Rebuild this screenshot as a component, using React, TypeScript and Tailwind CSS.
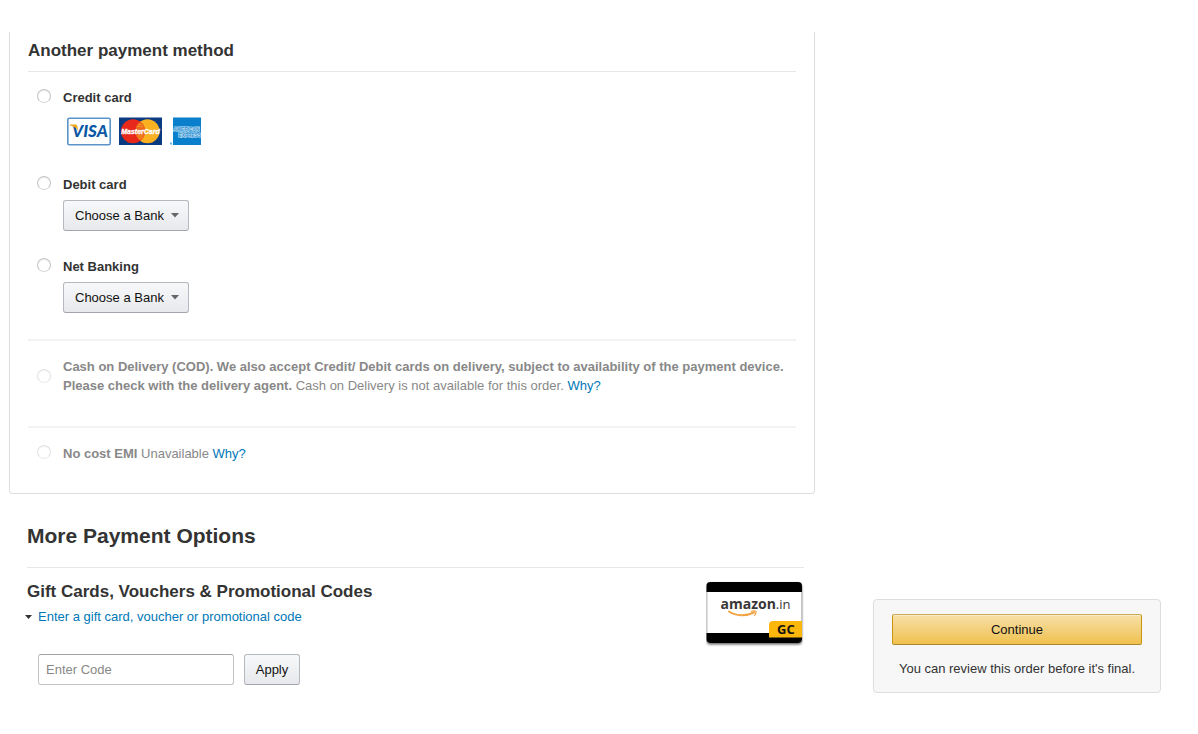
import type { ReactNode } from 'react';

const BANKS = ['Axis Bank', 'HDFC Bank', 'ICICI Bank', 'State Bank of India'];

const VisaLogo = () => (
  <svg viewBox="0 0 44 29" className="w-11 h-[29px]" role="img" aria-label="Visa">
    <rect x="0.800" y="1.200" width="42.400" height="26.600" rx="1.500" fill="#fff" stroke="#5a93c8" strokeWidth="1.600" />
    <text
      x="5"
      y="20"
      fontFamily="Lato, sans-serif"
      fontSize="17"
      fontWeight="900"
      fontStyle="italic"
      fill="#0b58a4"
    >
      VISA
    </text>
    <path d="M3 7.500h5.500c1 0 1.600.6 1.800 1.500l1 5C9.800 11.200 7.200 9 3 8.500z" fill="#f2a91d" />
  </svg>
);

const MasterCardLogo = () => (
  <svg viewBox="0 0 43 29" className="w-[43px] h-[29px]" role="img" aria-label="MasterCard">
    <rect y="0.500" width="43" height="27.500" fill="#0a3a80" />
    <circle cx="28.500" cy="14.200" r="12" fill="#f9b021" />
    <circle cx="14" cy="14.200" r="12" fill="#e8281b" />
    <path d="M21.200 4.600a12 12 0 0 1 0 19.200 12 12 0 0 1 0-19.200z" fill="#ee6a1f" />
    <path d="M19 7.500h4M17.800 9.500h6.400M17.800 19h6.400M19 21h4" stroke="#f39a20" strokeWidth="0.800" />
    <text
      x="21.500"
      y="17"
      textAnchor="middle"
      fontFamily="Liberation Sans, sans-serif"
      fontSize="7"
      fontWeight="700"
      fontStyle="italic"
      fill="#fff"
      stroke="#fff"
      strokeWidth="0.300"
    >
      MasterCard
    </text>
  </svg>
);

const AmexLogo = () => (
  <svg viewBox="0 0 31 29" className="w-[31px] h-[29px]" role="img" aria-label="American Express">
    <rect x="3" y="0.500" width="28" height="27.500" fill="#0a7fcb" />
    <rect y="25.500" width="2" height="2" fill="#6db6e2" />
    <g
      fontFamily="Liberation Sans, sans-serif"
      fontSize="4.800"
      fontWeight="700"
      fill="#2b8fd2"
      stroke="#c5e2f4"
      strokeWidth="1.200"
      paintOrder="stroke"
    >
      <text x="3.500" y="14">AMERICAN</text>
      <text x="8.500" y="19.500">EXPRESS</text>
    </g>
  </svg>
);

const GiftCardArt = () => (
  <svg viewBox="0 0 98 68" className="w-[98px] h-[68px]" role="img" aria-label="amazon.in gift card">
    <defs>
      <clipPath id="card">
        <rect x="0.500" y="2" width="95.500" height="61" rx="4" />
      </clipPath>
      <filter id="shadow" x="-10%" y="-10%" width="120%" height="130%">
        <feDropShadow dx="0" dy="1.500" stdDeviation="1.200" floodOpacity="0.600" />
      </filter>
    </defs>
    <rect x="0.500" y="2" width="95.500" height="61" rx="4" fill="#777" filter="url(#shadow)" />
    <g clipPath="url(#card)">
      <rect width="97" height="64" fill="#fff" />
      <rect width="97" height="12" fill="#000" />
      <rect y="53" width="97" height="11" fill="#000" />
      <path d="M63 57.500V45a4 4 0 0 1 4-4h30v16.500z" fill="#fbb70b" />
      <path d="M1 12v41M95.500 12v29" stroke="#c4c4c4" />
    </g>
    <text x="14.500" y="29" fontFamily="Open Sans, sans-serif" fontSize="14" fontWeight="700" fill="#3a3637">
      amazon
      <tspan fontSize="13" fontWeight="400">
        .in
      </tspan>
    </text>
    <path d="M23 31.500c7 4.800 17 4.800 25 1" fill="none" stroke="#f3a545" strokeWidth="2" strokeLinecap="round" />
    <path d="M45 31.500c2-.8 4-.8 5 0 .2 1.400-.5 3-1.700 4.300" fill="none" stroke="#f3a545" strokeWidth="1.200" />
    <text x="71" y="54" fontFamily="Open Sans, sans-serif" fontSize="13" fontWeight="700" fill="#111">
      GC
    </text>
  </svg>
);

const Radio = ({ id, disabled }: { id: string; disabled?: boolean }) => (
  <input
    type="radio"
    id={id}
    name="payment"
    disabled={disabled}
    className="appearance-none shrink-0 w-[14px] h-[14px] rounded-full bg-white border border-[#c4c4c4] border-b-[#d8d8d8] shadow-[inset_0_1px_1px_rgba(0,0,0,0.08)] checked:border-4 checked:border-[#e77600] disabled:opacity-50"
  />
);

const BankSelect = ({ label }: { label: string }) => (
  <div className="relative w-[126px] mt-[6px]">
    <select
      aria-label={label}
      className="appearance-none block w-full h-[31px] pl-[11px] pr-6 rounded-[3px] border border-[#b4b8bf] border-b-[#a2a6ac] bg-linear-to-b from-[#f7f8fa] to-[#e7e9ec] text-[#111]"
    >
      <option>Choose a Bank</option>
      {BANKS.map((bank) => (
        <option key={bank}>{bank}</option>
      ))}
    </select>
    <svg
      viewBox="0 0 8 5"
      className="absolute right-[10px] top-[13px] w-2 h-[5px] fill-[#666] pointer-events-none"
    >
      <path d="M0 0h8L4 4.500z" />
    </svg>
  </div>
);

const Option = ({ id, label, children }: { id: string; label: string; children: ReactNode }) => (
  <div className="flex gap-3 items-start">
    <div className="pt-px flex">
      <Radio id={id} />
    </div>
    <div>
      <label htmlFor={id} className="block font-bold">
        {label}
      </label>
      {children}
    </div>
  </div>
);

const App = () => {
  return (
    <div className="flex items-end gap-[58px] pt-8 pl-[9px] pr-[37px] pb-10 font-['Liberation_Sans',Arial,sans-serif] text-[13px] leading-[19px] text-[#333] bg-white">
      <main className="flex-1 pb-2">
        {/* Payment methods */}
        <section className="border border-t-0 border-[#ddd] rounded-b-[4px] pt-[7px] px-[18px] pb-[30px]">
          <h2 className="text-[17px] leading-6 font-bold pb-2 border-b border-[#e7e7e7]">
            Another payment method
          </h2>

          <div className="pt-4 pl-[9px] pb-[26px]">
            <Option id="credit" label="Credit card">
              <div className="flex gap-2 mt-[10px] pl-1">
                <VisaLogo />
                <MasterCardLogo />
                <AmexLogo />
              </div>
            </Option>
            <div className="mt-[29px]">
              <Option id="debit" label="Debit card">
                <BankSelect label="Debit card bank" />
              </Option>
            </div>
            <div className="mt-[26px]">
              <Option id="net" label="Net Banking">
                <BankSelect label="Net banking bank" />
              </Option>
            </div>
          </div>

          <div className="flex gap-3 items-center border-t-2 border-[#f3f3f3] pt-4 pl-[9px] pb-[31px] text-[#888]">
            <Radio id="cod" disabled />
            <p>
              <label htmlFor="cod" className="font-bold">
                Cash on Delivery (COD). We also accept Credit/ Debit cards on delivery, subject to
                availability of the payment device. Please check with the delivery agent.
              </label>{' '}
              Cash on Delivery is not available for this order.{' '}
              <a href="#cod-help" className="text-[#0077b8] hover:underline">
                Why?
              </a>
            </p>
          </div>

          <div className="flex gap-3 items-start border-t-2 border-[#f3f3f3] pt-4 pl-[9px] text-[#888]">
            <div className="pt-px flex">
              <Radio id="emi" disabled />
            </div>
            <p>
              <label htmlFor="emi" className="font-bold">
                No cost EMI
              </label>{' '}
              Unavailable{' '}
              <a href="#emi-help" className="text-[#0077b8] hover:underline">
                Why?
              </a>
            </p>
          </div>
        </section>

        {/* Gift cards */}
        <section className="mt-7 pl-[18px] pr-[11px]">
          <h1 className="text-[21px] leading-7 font-bold pb-[17px] border-b border-[#e7e7e7]">
            More Payment Options
          </h1>
          <div className="flex justify-between items-start pt-3">
            <div>
              <h2 className="text-[17px] leading-6 font-bold">
                Gift Cards, Vouchers &amp; Promotional Codes
              </h2>
              <div className="flex items-center gap-1 -ml-[3px] mt-[3px]">
                <svg viewBox="0 0 7 4" className="w-[7px] h-1 mx-px fill-[#333]">
                  <path d="M0 0h7L3.500 4z" />
                </svg>
                <a href="#gift" className="text-[#0077b8] hover:underline ml-px">
                  Enter a gift card, voucher or promotional code
                </a>
              </div>
              <form className="flex gap-[10px] mt-7 pl-[11px]" onSubmit={(e) => e.preventDefault()}>
                <input
                  type="text"
                  aria-label="Gift card code"
                  placeholder="Enter Code"
                  className="w-[196px] h-[31px] px-[7px] rounded-[3px] border border-[#c4c4c4] border-t-[#a3a3a3] bg-white placeholder:text-[#888]"
                />
                <button className="w-14 h-[31px] rounded-[3px] border border-[#b4b8bf] border-b-[#a2a6ac] bg-linear-to-b from-[#f7f8fa] to-[#e7e9ec] text-[#111]">
                  Apply
                </button>
              </form>
            </div>
            <GiftCardArt />
          </div>
        </section>
      </main>

      <aside className="w-72 shrink-0 rounded-[4px] border border-[#ddd] bg-[#f7f7f7] px-[18px] py-[14px] text-center">
        <button className="w-full h-[31px] rounded-[2px] border border-[#c89411] border-t-[#cba957] border-b-[#a88734] bg-linear-to-b from-[#f7dfa5] to-[#f0c14b] hover:to-[#eeb933] shadow-[inset_0_1px_0_rgba(255,255,255,0.4)] text-[#111]">
          Continue
        </button>
        <p className="mt-[14px]">You can review this order before it's final.</p>
      </aside>
    </div>
  );
};

export default App;
